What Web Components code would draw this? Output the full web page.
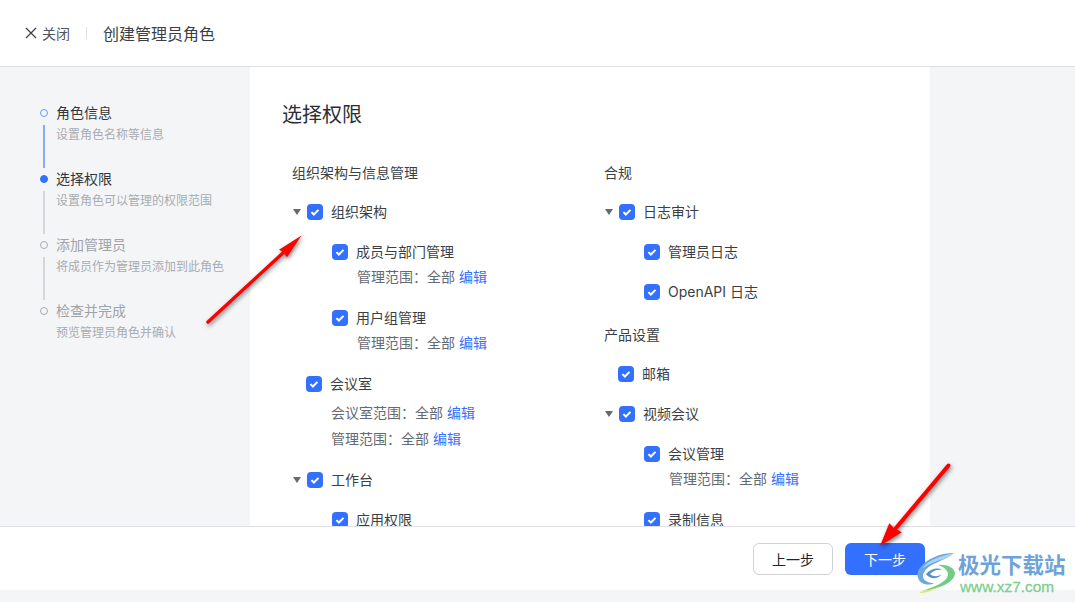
<!DOCTYPE html>
<html lang="zh-CN">
<head>
<meta charset="utf-8">
<title>创建管理员角色</title>
<style>
  html, body { margin: 0; height: 100%; }
  body { font-family: Inter, "Noto Sans CJK SC", sans-serif; color: #1f2329; background: #f4f5f7; overflow: hidden; }
</style>
</head>
<body>
<role-page>
  <page-header slot="header">创建管理员角色</page-header>

  <step-rail slot="rail">
    <step-item state="done" heading="角色信息">设置角色名称等信息</step-item>
    <step-item state="current" heading="选择权限">设置角色可以管理的权限范围</step-item>
    <step-item heading="添加管理员">将成员作为管理员添加到此角色</step-item>
    <step-item heading="检查并完成" last>预览管理员角色并确认</step-item>
  </step-rail>

  <perm-panel heading="选择权限">
    <perm-column>
      <perm-group heading="组织架构与信息管理">
        <perm-row kind="parent">组织架构</perm-row>
        <perm-row kind="child">成员与部门管理
          <perm-scope slot="scope" style="margin-top:2px">管理范围&#xFF1A;全部</perm-scope>
        </perm-row>
        <perm-row kind="child" style="margin-top:18px">用户组管理
          <perm-scope slot="scope" style="margin-top:2px">管理范围&#xFF1A;全部</perm-scope>
        </perm-row>
        <perm-row kind="leaf" style="margin-top:18px">会议室
          <perm-scope slot="scope" inset style="margin-top:6px">会议室范围&#xFF1A;全部</perm-scope>
          <perm-scope slot="scope" inset style="margin-top:4px">管理范围&#xFF1A;全部</perm-scope>
        </perm-row>
        <perm-row kind="parent" style="margin-top:18px">工作台</perm-row>
        <perm-row kind="child">应用权限</perm-row>
      </perm-group>
    </perm-column>
    <perm-column>
      <perm-group heading="合规">
        <perm-row kind="parent">日志审计</perm-row>
        <perm-row kind="child">管理员日志</perm-row>
        <perm-row kind="child">OpenAPI 日志</perm-row>
      </perm-group>
      <perm-group heading="产品设置" style="margin-top:20px">
        <perm-row kind="leaf">邮箱</perm-row>
        <perm-row kind="parent">视频会议</perm-row>
        <perm-row kind="child">会议管理
          <perm-scope slot="scope" style="margin-top:2px">管理范围&#xFF1A;全部</perm-scope>
        </perm-row>
        <perm-row kind="child" style="margin-top:18px">录制信息</perm-row>
      </perm-group>
    </perm-column>
  </perm-panel>

  <page-footer slot="footer"></page-footer>
  <arrow-marks slot="overlay"></arrow-marks>
  <site-mark slot="overlay"></site-mark>
</role-page>

<script>
const pageTemplate = document.createElement('template');
pageTemplate.innerHTML = `
  <style>
    :host { display: flex; flex-direction: column; height: 100vh; position: relative; overflow: hidden; }
    main { display: flex; height: 459px; overflow: hidden; background: #f4f5f7; }
    .content { width: 680px; background: #fff; overflow: hidden; }
    .strip { flex: 1; background: #f4f5f7; }
  </style>
  <slot name="header"></slot>
  <main>
    <slot name="rail"></slot>
    <div class="content"><slot></slot></div>
  </main>
  <slot name="footer"></slot>
  <div class="strip"></div>
  <slot name="overlay"></slot>
`;
customElements.define('role-page', class extends HTMLElement {
  constructor() {
    super();
    this.attachShadow({ mode: 'open' }).appendChild(pageTemplate.content.cloneNode(true));
  }
});

const headerTemplate = document.createElement('template');
headerTemplate.innerHTML = `
  <style>
    :host { display: flex; align-items: center; height: 66px; padding-left: 25px; background: #fff; border-bottom: 1px solid #dee0e3; }
    svg { width: 12px; height: 12px; display: block; }
    .close { display: flex; align-items: center; gap: 5px; font-size: 14px; color: #51565d; }
    .divider { width: 1px; height: 12px; background: #dee0e3; margin: 0 16px; }
    .title { font-size: 16px; color: #3b3f45; }
  </style>
  <div class="close">
    <svg viewBox="0 0 12 12" fill="none" stroke="#3f4348" stroke-width="1.3"><path d="M1 1l10 10M11 1L1 11"/></svg>
    <span>关闭</span>
  </div>
  <div class="divider"></div>
  <div class="title"><slot></slot></div>
`;
customElements.define('page-header', class extends HTMLElement {
  constructor() {
    super();
    this.attachShadow({ mode: 'open' }).appendChild(headerTemplate.content.cloneNode(true));
  }
});

const railTemplate = document.createElement('template');
railTemplate.innerHTML = `
  <style>
    :host { display: block; width: 250px; flex: none; box-sizing: border-box; padding: 35px 0 0 40px; background: #f4f5f7; }
  </style>
  <slot></slot>
`;
customElements.define('step-rail', class extends HTMLElement {
  constructor() {
    super();
    this.attachShadow({ mode: 'open' }).appendChild(railTemplate.content.cloneNode(true));
  }
});

const stepTemplate = document.createElement('template');
stepTemplate.innerHTML = `
  <style>
    :host { display: flex; gap: 8px; height: 66px; }
    .track { width: 8px; display: flex; flex-direction: column; align-items: center; }
    .dot-box { height: 22px; display: flex; align-items: center; }
    .dot { width: 8px; height: 8px; box-sizing: border-box; border-radius: 50%; border: 1.5px solid #a6aab0; }
    .line { width: 2px; height: 43px; margin-top: 1px; background: #d5d7db; }
    .heading { font-size: 14px; line-height: 22px; color: #a0a4aa; }
    .sub { font-size: 12px; line-height: 22px; color: #a8acb2; white-space: nowrap; }
    :host([state="done"]) .dot { border-color: #6f97fb; }
    :host([state="done"]) .line { background: #88a9fb; }
    :host([state="done"]) .heading, :host([state="current"]) .heading { color: #33373c; }
    :host([state="current"]) .dot { background: #3370ff; border-color: #3370ff; }
    :host([last]) .line { display: none; }
  </style>
  <div class="track">
    <div class="dot-box"><div class="dot"></div></div>
    <div class="line"></div>
  </div>
  <div>
    <div class="heading"></div>
    <div class="sub"><slot></slot></div>
  </div>
`;
customElements.define('step-item', class extends HTMLElement {
  constructor() {
    super();
    this.attachShadow({ mode: 'open' }).appendChild(stepTemplate.content.cloneNode(true));
  }
  connectedCallback() {
    this.shadowRoot.querySelector('.heading').textContent = this.getAttribute('heading');
  }
});

const panelTemplate = document.createElement('template');
panelTemplate.innerHTML = `
  <style>
    :host { display: block; padding: 34px 0 0 32px; }
    h2 { margin: 0; font-size: 20px; line-height: 28px; font-weight: 400; color: #2b2f36; }
    .columns { display: grid; grid-template-columns: 312px 312px; margin: 33px 0 0 10px; }
  </style>
  <h2></h2>
  <div class="columns"><slot></slot></div>
`;
customElements.define('perm-panel', class extends HTMLElement {
  constructor() {
    super();
    this.attachShadow({ mode: 'open' }).appendChild(panelTemplate.content.cloneNode(true));
  }
  connectedCallback() {
    this.shadowRoot.querySelector('h2').textContent = this.getAttribute('heading');
  }
});

customElements.define('perm-column', class extends HTMLElement {
  constructor() {
    super();
    this.attachShadow({ mode: 'open' }).innerHTML = `
      <style>:host { display: block; }</style>
      <slot></slot>
    `;
  }
});

const groupTemplate = document.createElement('template');
groupTemplate.innerHTML = `
  <style>
    :host { display: block; }
    .heading { font-size: 14px; line-height: 22px; color: #3b3f45; }
  </style>
  <div class="heading"></div>
  <slot></slot>
`;
customElements.define('perm-group', class extends HTMLElement {
  constructor() {
    super();
    this.attachShadow({ mode: 'open' }).appendChild(groupTemplate.content.cloneNode(true));
  }
  connectedCallback() {
    this.shadowRoot.querySelector('.heading').textContent = this.getAttribute('heading');
  }
});

const rowTemplate = document.createElement('template');
rowTemplate.innerHTML = `
  <style>
    :host { display: block; margin-top: 16px; }
    .row { display: flex; align-items: center; height: 24px; font-size: 14px; color: #3b3f45; white-space: nowrap; }
    .label { line-height: 22px; }
    .caret { display: none; width: 0; height: 0; margin-right: 6px; border-left: 4px solid transparent; border-right: 4px solid transparent; border-top: 6px solid #646a73; }
    .box { width: 16px; height: 16px; border-radius: 4px; background: #3370ff; margin-right: 8px; flex: none; display: block; }
    :host([kind="parent"]) .row { padding-left: 1px; }
    :host([kind="parent"]) .caret { display: block; }
    :host([kind="leaf"]) .row { padding-left: 14px; }
    :host([kind="child"]) .row { padding-left: 40px; }
  </style>
  <div class="row">
    <span class="caret"></span>
    <svg class="box" viewBox="0 0 16 16" fill="none" stroke="#fff" stroke-width="2"><path d="M4.4 8.1l2.5 2.4 4.6-4.6"/></svg>
    <span class="label"><slot></slot></span>
  </div>
  <slot name="scope"></slot>
`;
customElements.define('perm-row', class extends HTMLElement {
  constructor() {
    super();
    this.attachShadow({ mode: 'open' }).appendChild(rowTemplate.content.cloneNode(true));
  }
});

const scopeTemplate = document.createElement('template');
scopeTemplate.innerHTML = `
  <style>
    :host { display: flex; gap: 4px; padding-left: 65px; font-size: 14px; line-height: 22px; color: #646a73; white-space: nowrap; }
    :host([inset]) { padding-left: 39px; }
    a { color: #3370ff; text-decoration: none; }
  </style>
  <span><slot></slot></span>
  <a href="#">编辑</a>
`;
customElements.define('perm-scope', class extends HTMLElement {
  constructor() {
    super();
    this.attachShadow({ mode: 'open' }).appendChild(scopeTemplate.content.cloneNode(true));
  }
});

const footerTemplate = document.createElement('template');
footerTemplate.innerHTML = `
  <style>
    :host { display: flex; justify-content: flex-end; align-items: center; gap: 12px; box-sizing: border-box; height: 64px; padding-right: 150px; background: #fff; border-top: 1px solid #dee0e3; }
    button { width: 80px; height: 32px; box-sizing: border-box; border-radius: 6px; font: inherit; font-size: 14px; cursor: pointer; }
    .prev { background: #fff; border: 1px solid #d0d3d6; color: #1f2329; }
    .next { background: #3370ff; border: none; color: #fff; }
  </style>
  <button class="prev">上一步</button>
  <button class="next">下一步</button>
`;
customElements.define('page-footer', class extends HTMLElement {
  constructor() {
    super();
    this.attachShadow({ mode: 'open' }).appendChild(footerTemplate.content.cloneNode(true));
  }
});

// red arrows drawn on top of the screenshot
customElements.define('arrow-marks', class extends HTMLElement {
  constructor() {
    super();
    this.attachShadow({ mode: 'open' }).innerHTML = `
      <style>
        :host { position: absolute; inset: 0; pointer-events: none; }
        svg { width: 100%; height: 100%; display: block; filter: drop-shadow(1px 2px 2px rgba(0,0,0,.5)); }
      </style>
      <svg viewBox="0 0 1075 602" fill="#ff0000" stroke="#ff0000" stroke-linecap="round">
        <path d="M208 322L284 252" stroke-width="3.4" fill="none"/>
        <path d="M301.5 235.5L279 249.7 283 252 287 257.3z" stroke="none"/>
        <path d="M948.5 465.5L896 528" stroke-width="4" fill="none"/>
        <path d="M880 546L889.3 523.3 894 528 901.7 532.3z" stroke="none"/>
      </svg>
    `;
  }
});

// download site watermark, bottom right
customElements.define('site-mark', class extends HTMLElement {
  constructor() {
    super();
    this.attachShadow({ mode: 'open' }).innerHTML = `
      <style>
        :host { position: absolute; left: 916px; top: 552px; display: flex; pointer-events: none; }
        svg { width: 42px; height: 42px; display: block; flex: none; }
        .name { font-size: 21.5px; line-height: 26px; font-weight: 700; color: #6ea3d9; white-space: nowrap; }
        .url { font-family: "Liberation Sans", sans-serif; font-size: 15.4px; line-height: 18px; margin: 0 0 0 2px; color: #7ccf8d; white-space: nowrap; -webkit-text-stroke: .3px #7ccf8d; }
      </style>
      <svg viewBox="0 0 42 42" fill="none">
        <path d="M38 1C24 1 10 7 4 16 0 21 1 28 6 31c4 2 9 2 12 0-5 0-10-2-11-6-1-5 5-11 13-14 6-3 13-6 18-10z" fill="#6fa8dc"/>
        <path d="M38 1c-8 2-17 4-25 9-3 2-5 4-6 6 6-4 13-7 20-9 4-1 8-3 11-6z" fill="#a9d6ee"/>
        <path d="M10 22c4-5 12-7 16-4-3-1-9 0-12 4 3 3 9 3 11 0-1 5-11 6-15 0z" fill="#5b8fc7"/>
        <path d="M22 13c8-1 16 2 17 8 0 8-13 16-33 18 12-4 25-9 26-16 0-5-4-8-10-10z" fill="#72cc85"/>
        <path d="M4 40c6-2 14-3 20-6-6 4-13 7-20 7z" fill="#dfe56a"/>
      </svg>
      <div>
        <div class="name">极光下载站</div>
        <div class="url">www.xz7.com</div>
      </div>
    `;
  }
});
</script>
</body>
</html>
